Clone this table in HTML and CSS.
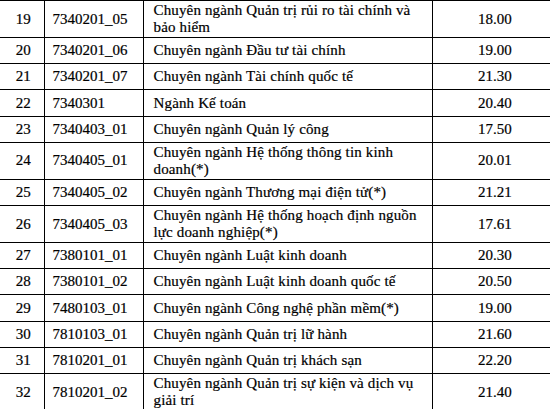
FILE: index.html
```html
<!DOCTYPE html>
<html>
<head>
<meta charset="utf-8">
<link rel="stylesheet" href="styles.css">
</head>
<body>
<div class="frame">
<table class="grid">
<colgroup>
<col class="c-stt"><col class="c-code"><col class="c-name"><col class="c-score">
</colgroup>
<tbody>
<tr class="spacer"><td></td><td></td><td></td><td></td></tr>
<tr class="tall"><td class="stt">19</td><td class="code">7340201_05</td><td class="name">Chuyên ngành Quản trị rủi ro tài chính và<br>bảo hiểm</td><td class="score">18.00</td></tr>
<tr><td class="stt">20</td><td class="code">7340201_06</td><td class="name">Chuyên ngành Đầu tư tài chính</td><td class="score">19.00</td></tr>
<tr><td class="stt">21</td><td class="code">7340201_07</td><td class="name">Chuyên ngành Tài chính quốc tế</td><td class="score">21.30</td></tr>
<tr><td class="stt">22</td><td class="code">7340301</td><td class="name">Ngành Kế toán</td><td class="score">20.40</td></tr>
<tr><td class="stt">23</td><td class="code">7340403_01</td><td class="name">Chuyên ngành Quản lý công</td><td class="score">17.50</td></tr>
<tr class="tall"><td class="stt">24</td><td class="code">7340405_01</td><td class="name">Chuyên ngành Hệ thống thông tin kinh<br>doanh(*)</td><td class="score">20.01</td></tr>
<tr><td class="stt">25</td><td class="code">7340405_02</td><td class="name">Chuyên ngành Thương mại điện tử(*)</td><td class="score">21.21</td></tr>
<tr class="tall"><td class="stt">26</td><td class="code">7340405_03</td><td class="name">Chuyên ngành Hệ thống hoạch định nguồn<br>lực doanh nghiệp(*)</td><td class="score">17.61</td></tr>
<tr><td class="stt">27</td><td class="code">7380101_01</td><td class="name">Chuyên ngành Luật kinh doanh</td><td class="score">20.30</td></tr>
<tr><td class="stt">28</td><td class="code">7380101_02</td><td class="name">Chuyên ngành Luật kinh doanh quốc tế</td><td class="score">20.50</td></tr>
<tr><td class="stt">29</td><td class="code">7480103_01</td><td class="name">Chuyên ngành Công nghệ phần mềm(*)</td><td class="score">19.00</td></tr>
<tr><td class="stt">30</td><td class="code">7810103_01</td><td class="name">Chuyên ngành Quản trị lữ hành</td><td class="score">21.60</td></tr>
<tr><td class="stt">31</td><td class="code">7810201_01</td><td class="name">Chuyên ngành Quản trị khách sạn</td><td class="score">22.20</td></tr>
<tr class="tall"><td class="stt">32</td><td class="code">7810201_02</td><td class="name">Chuyên ngành Quản trị sự kiện và dịch vụ<br>giải trí</td><td class="score">21.40</td></tr>
</tbody>
</table>
</div>
</body>
</html>
```

FILE: styles.css
```css
html, body {
  margin: 0;
  padding: 0;
  background: #ffffff;
}
.frame {
  width: 550px;
  height: 409px;
  overflow: hidden;
  position: relative;
}
.grid {
  border-collapse: collapse;
  table-layout: fixed;
  width: 557px;
  font-family: "Liberation Serif", "Times New Roman", serif;
  font-size: 15px;
  line-height: 16.7px;
  color: #000000;
  -webkit-text-stroke: 0.2px #000000;
}
.c-stt { width: 44px; }
.c-code { width: 99px; }
.c-name { width: 289px; }
.c-score { width: 125px; }
.grid td {
  border: 1px solid #000000;
  border-left: 0;
  padding: 0;
  height: 25.2px;
  vertical-align: middle;
  white-space: nowrap;
}
.grid td + td {
  border-left: 1px solid #000000;
}
.grid tr td:last-child {
  border-right: 0;
}
.grid tr.spacer td {
  height: 0;
  border-top: 0;
  line-height: 0;
  font-size: 0;
}
.grid tr.tall td {
  height: 36px;
  padding: 0;
}
.stt {
  text-align: center;
  padding-left: 3px !important;
}
.code {
  padding-left: 8px !important;
}
.name {
  padding-left: 10px !important;
  letter-spacing: 0.15px;
}
.score {
  text-align: center;
}
```
